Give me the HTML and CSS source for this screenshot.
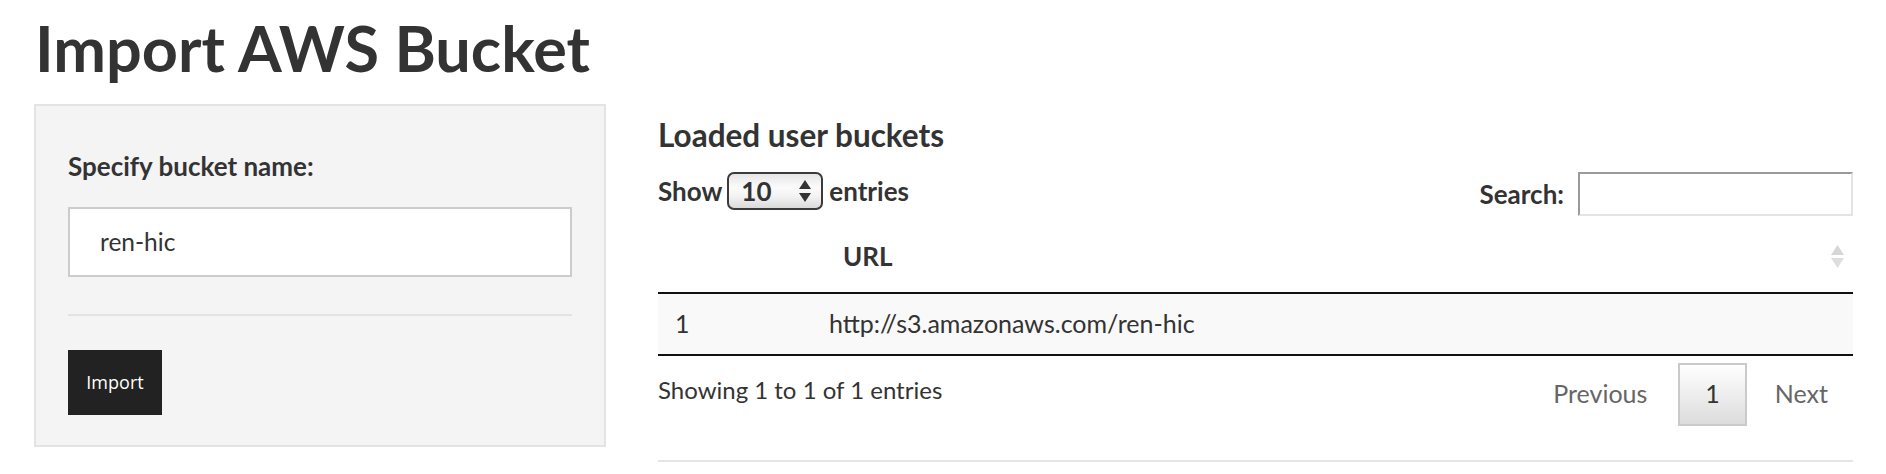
FILE: index.html
```html
<!DOCTYPE html>
<html lang="en">
<head>
<meta charset="utf-8">
<title>Import AWS Bucket</title>
<link rel="stylesheet" href="styles.css">
</head>
<body>
<div class="page">
  <h1 class="title">Import AWS Bucket</h1>
  <div class="layout">
    <form class="sidebar">
      <label class="field-label" for="bucket">Specify bucket name:</label>
      <input class="text-input" id="bucket" type="text" value="ren-hic">
      <hr class="sidebar-rule">
      <button class="import-btn" type="button">Import</button>
    </form>
    <div class="main">
      <h4 class="section-title">Loaded user buckets</h4>
      <div class="dt-top">
        <div class="dt-length">
          <span class="dt-label">Show</span>
          <span class="select"><span class="select-value">10</span><svg class="select-arrows" width="12" height="22" viewBox="0 0 12 22"><path d="M6 0 L12 9 L0 9 Z" fill="#333"/><path d="M0 13 L12 13 L6 22 Z" fill="#333"/></svg></span>
          <span class="dt-label">entries</span>
        </div>
        <div class="dt-filter">
          <span class="dt-label">Search:</span>
          <input class="search-input" type="search">
        </div>
      </div>
      <table class="dt-table">
        <colgroup><col class="col-index"><col></colgroup>
        <thead>
          <tr><th></th><th class="sortable">URL<svg class="sort-icon" width="13" height="23" viewBox="0 0 13 23"><path d="M6.5 0 L13 10 L0 10 Z" fill="#d6d6d6"/><path d="M0 13 L13 13 L6.5 23 Z" fill="#dedede"/></svg></th></tr>
        </thead>
        <tbody>
          <tr class="odd"><td>1</td><td>http://s3.amazonaws.com/ren-hic</td></tr>
        </tbody>
      </table>
      <div class="dt-bottom">
        <div class="dt-info">Showing 1 to 1 of 1 entries</div>
        <div class="dt-paginate">
          <span class="pg-btn disabled">Previous</span>
          <span class="pg-btn current">1</span>
          <span class="pg-btn disabled next">Next</span>
        </div>
      </div>
      <hr class="main-rule">
    </div>
  </div>
</div>
</body>
</html>
```
FILE: styles.css
```css
html, body {
  margin: 0;
  padding: 0;
  background: #ffffff;
}

body {
  font-family: "Lato", "Liberation Sans", sans-serif;
  color: #333333;
}

.page {
  padding: 0 33px 0 34px;
}

.title {
  font-family: "Lato", sans-serif;
  font-weight: 700;
  font-size: 63px;
  line-height: 1.2;
  margin: 10px 0 18px 1px;
  color: #333333;
}

.layout {
  display: flex;
  align-items: flex-start;
  gap: 52px;
}

/* ---------- sidebar ---------- */
.sidebar {
  box-sizing: border-box;
  width: 572px;
  flex: 0 0 572px;
  background: #f4f4f4;
  border: 2px solid #e3e3e3;
  padding: 45px 32px 30px;
  display: flex;
  flex-direction: column;
  align-items: flex-start;
}

.field-label {
  font-weight: 700;
  font-size: 26px;
  line-height: 1.2;
  margin-bottom: 25px;
}

.text-input {
  box-sizing: border-box;
  width: 100%;
  height: 70px;
  border: 2px solid #cccccc;
  background: #ffffff;
  padding: 0 0 0 30px;
  font-family: "Lato", sans-serif;
  font-size: 24.5px;
  color: #333333;
  outline: none;
}

.sidebar-rule {
  width: 100%;
  border: 0;
  border-top: 2px solid #e3e3e3;
  margin: 37px 0 34px;
}

.import-btn {
  width: 94px;
  height: 65px;
  border: 0;
  border-radius: 0;
  background: #222222;
  color: #ffffff;
  font-family: "Open Sans", sans-serif;
  font-size: 18px;
  padding: 0;
}

/* ---------- main ---------- */
.main {
  flex: 1 1 auto;
  min-width: 0;
}

.section-title {
  font-weight: 700;
  font-size: 31.5px;
  line-height: 1.2;
  margin: 13px 0 18px;
}

.dt-top {
  display: flex;
  justify-content: space-between;
  align-items: flex-start;
}

.dt-length {
  display: flex;
  align-items: center;
  height: 38px;
}

.dt-label {
  font-weight: 700;
  font-size: 26px;
  line-height: 1.2;
}

.select {
  box-sizing: border-box;
  display: flex;
  align-items: center;
  justify-content: space-between;
  width: 96px;
  height: 38px;
  margin: 0 6px 0 5px;
  padding: 0 10px 0 12px;
  border: 2px solid #3a3a3a;
  border-radius: 7px;
  background: linear-gradient(to bottom, #e6e6e6 0%, #fbfbfb 40%, #f3f3f3 65%, #dadada 100%);
}

.select-value {
  font-weight: 700;
  font-size: 26px;
  line-height: 1;
}

.dt-filter {
  display: flex;
  align-items: center;
  height: 44px;
  gap: 14px;
}

.search-input {
  box-sizing: border-box;
  width: 275px;
  height: 44px;
  border-style: solid;
  border-width: 2px;
  border-color: #9a9a9a #e4e4e4 #e4e4e4 #9a9a9a;
  background: #ffffff;
  padding: 0 6px;
  outline: none;
}

.dt-table {
  width: 100%;
  margin-top: 7px;
  border-collapse: collapse;
  table-layout: fixed;
}

.col-index {
  width: 154px;
}

.dt-table th {
  position: relative;
  text-align: left;
  font-weight: 700;
  font-size: 26px;
  line-height: 1.2;
  padding: 18px 31px 19px;
  border-bottom: 2px solid #111111;
}

.sort-icon {
  position: absolute;
  right: 9px;
  top: 22px;
}

.dt-table td {
  font-size: 25px;
  line-height: 1.25;
  padding: 14px 17px 15px;
  border-bottom: 2px solid #111111;
}

.dt-table tr.odd td {
  background: #f9f9f9;
}

.dt-bottom {
  display: flex;
  justify-content: space-between;
  align-items: flex-start;
}

.dt-info {
  font-size: 24px;
  line-height: 1.2;
  padding-top: 20px;
}

.dt-paginate {
  display: flex;
  padding-top: 7px;
}

.pg-btn {
  box-sizing: border-box;
  font-size: 25px;
  line-height: 35px;
  padding: 11px 25px 13px;
  margin-left: 4px;
  border: 2px solid transparent;
  color: #666666;
}

.pg-btn.current {
  color: #333333;
  border-color: #cacaca;
  background: linear-gradient(to bottom, #ffffff 0%, #dcdcdc 100%);
}

.pg-btn.next {
  padding-left: 22px;
  padding-right: 23px;
}

.main-rule {
  border: 0;
  border-top: 2px solid #e5e5e5;
  margin: 34px 0 0;
}
```
